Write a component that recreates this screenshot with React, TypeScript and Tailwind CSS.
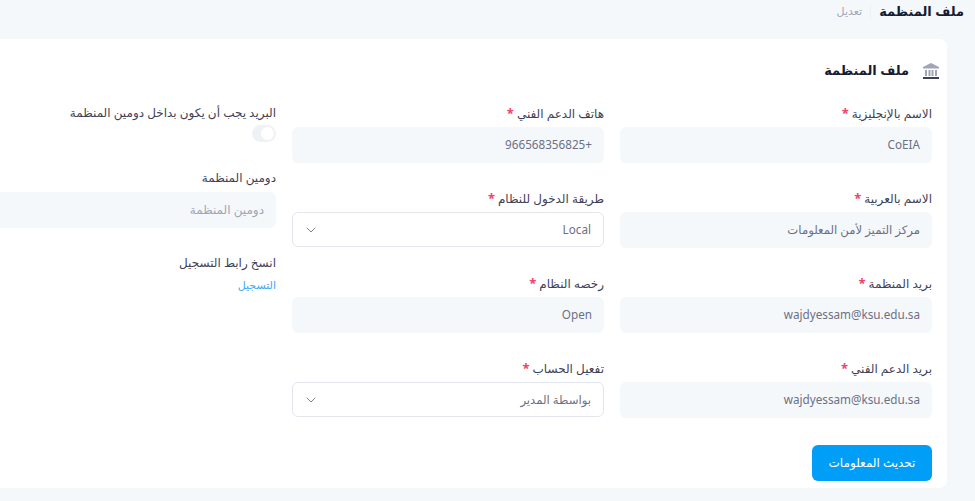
import { ChevronDown } from "lucide-react";

function Label({ text, required }: { text: string; required?: boolean }) {
  return (
    <label className="block h-[15px] text-[12px] leading-[14px] text-[#3f4254]">
      {text}
      {required && <span className="mr-[3px] text-[13px] font-bold text-[#f1416c]">*</span>}
    </label>
  );
}

function ReadField({ label, value }: { label: string; value: string }) {
  return (
    <div>
      <Label text={label} required />
      <div className="mt-[6px] flex h-9 items-center rounded-md bg-[#f5f8fa] px-3 text-[11.7px] text-[#6c7086]">
        {value}
      </div>
    </div>
  );
}

function SelectField({ label, value }: { label: string; value: string }) {
  return (
    <div>
      <Label text={label} required />
      <div className="mb-px mt-[6px] flex h-[35px] items-center justify-between rounded-md border border-[#e4e6ef] bg-white pl-[10px] pr-3 text-[11.7px] text-[#6c7086]">
        <span>{value}</span>
        <ChevronDown className="h-4 w-4 text-[#7e8299]" strokeWidth={1.5} />
      </div>
    </div>
  );
}

export default function App() {
  return (
    <div
      dir="rtl"
      className="h-[501px] w-[975px] overflow-hidden bg-[#f5f8fa] font-['Noto_Sans','DejaVu_Sans',sans-serif]"
    >
      <div className="flex h-[23px] items-center pr-[11px]">
        <h1 className="text-[13px] font-semibold text-[#181c32]">ملف المنظمة</h1>
        <span className="mx-2 h-[18px] w-px bg-[#eff2f5]" />
        <span className="text-[11px] text-[#a1a5b7]">تعديل</span>
      </div>

      <div className="mr-7 mt-4 h-[449px] w-[1000px] rounded-lg bg-white px-[15px] pt-[22px]">
        <div className="-mr-2 flex h-5 items-center gap-[13px]">
          <svg viewBox="0 0 18 18" className="h-[18px] w-[18px]" fill="#a1a5b7">
            <path d="M9 1 17 5v1.5H1V5z" />
            <path d="M3 8h2v6H3zM6.5 8h2v6h-2zM9.5 8h2v6h-2zM13 8h2v6h-2z" />
            <path d="M1 15h16v2H1z" fill="#3f4254" />
          </svg>
          <h2 className="text-[13px] font-semibold text-[#181c32]">ملف المنظمة</h2>
        </div>

        <div className="mt-[25px] grid grid-cols-[312px_312px_312px] gap-x-4">
          <div className="flex flex-col gap-7">
            <ReadField label="الاسم بالإنجليزية" value="CoEIA" />
            <ReadField label="الاسم بالعربية" value="مركز التميز لأمن المعلومات" />
            <ReadField label="بريد المنظمة" value="wajdyessam@ksu.edu.sa" />
            <ReadField label="بريد الدعم الفني" value="wajdyessam@ksu.edu.sa" />
          </div>
          <div className="flex flex-col gap-7">
            <ReadField label="هاتف الدعم الفني" value="+966568356825" />
            <SelectField label="طريقة الدخول للنظام" value="Local" />
            <ReadField label="رخصه النظام" value="Open" />
            <SelectField label="تفعيل الحساب" value="بواسطة المدير" />
          </div>
          <div>
            <Label text="البريد يجب أن يكون بداخل دومين المنظمة" />
            <div className="mt-1 flex h-[17px] w-6 items-center rounded-full bg-[#eff2f5] px-[2px]">
              <span className="h-[13px] w-[13px] rounded-full bg-white" />
            </div>
            <div className="mt-[29px]">
              <Label text="دومين المنظمة" />
            </div>
            <div className="mt-[6px] flex h-9 items-center rounded-md bg-[#f5f8fa] px-3 text-[12px] text-[#a1a5b7]">
              دومين المنظمة
            </div>
            <div className="mt-7">
              <Label text="انسخ رابط التسجيل" />
            </div>
            <a className="mt-[7px] block text-[11px] leading-[14px] text-[#3fa9f5]">التسجيل</a>
          </div>
        </div>

        <button className="mt-[27px] h-9 w-[120px] rounded-md bg-[#009ef7] text-[12px] text-white">
          تحديث المعلومات
        </button>
      </div>
    </div>
  );
}
